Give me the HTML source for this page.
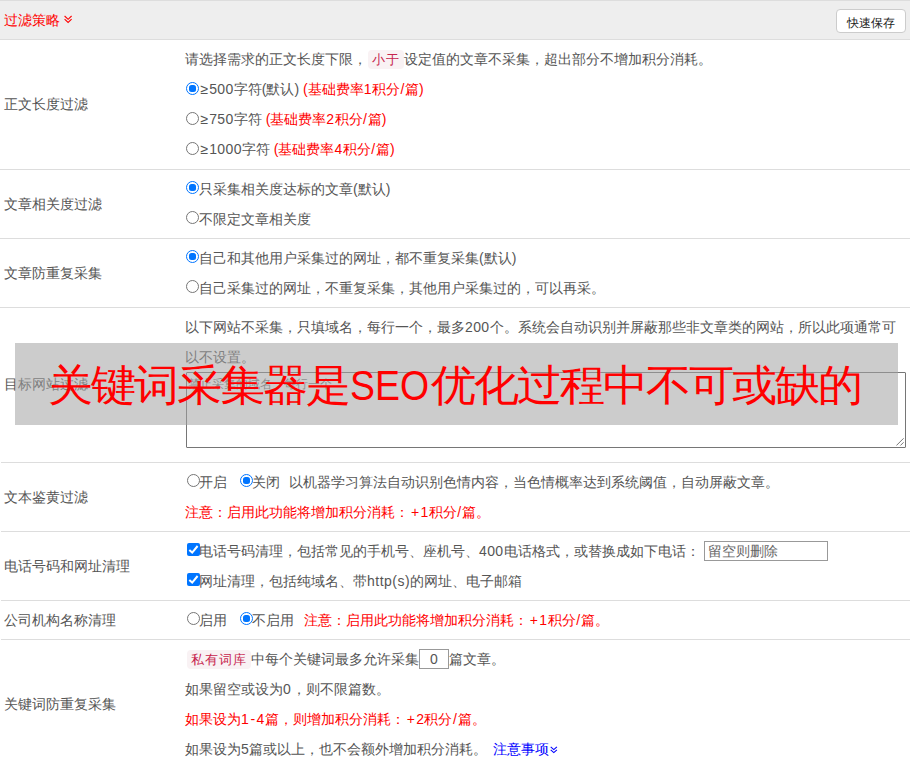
<!DOCTYPE html>
<html><head><meta charset="utf-8">
<style>
*{box-sizing:border-box;margin:0;padding:0}
html,body{width:912px;height:768px;overflow:hidden;background:#fff}
body{font-family:"Liberation Sans",sans-serif;font-size:14px;color:#555;position:relative}
.hd{position:absolute;left:0;top:0;width:910px;height:40px;background:#eee;border-top:1px solid #ddd;border-bottom:1px solid #ddd}
.hd .t{position:absolute;left:4px;top:9px;line-height:20px;color:#f00;font-size:14px;white-space:nowrap}
.btn{position:absolute;left:836px;top:8px;width:70px;height:24px;border:1px solid #ccc;border-radius:4px;background:#fff;color:#222;font-size:12px;line-height:26px;padding-right:1px;text-align:center}
.row{position:absolute;left:1px;width:909px;border-bottom:1px solid #ddd}
.lb{position:absolute;left:3px;line-height:20px;white-space:nowrap}
.ln{position:absolute;left:185px;height:30px;line-height:30px;white-space:nowrap}
.ge{padding-left:1.5px;letter-spacing:1px}
.dg{letter-spacing:.4px}
.sl{padding-left:.6px;letter-spacing:.7px}
.pl{padding-left:2px;letter-spacing:1.4px}
.r{color:#f00}
.rad{display:inline-block;width:13px;height:13px;border:1px solid #767676;border-radius:50%;vertical-align:0px;margin-left:2px;margin-right:-1px;position:relative;background:#fff}
.rad.on{border-color:#0075ff}
.rad.a,.rad.ad{margin-left:1px;margin-right:0}
.rad.ad{vertical-align:-1px}
.rad.on:after{content:"";position:absolute;left:2px;top:2px;width:7px;height:7px;border-radius:2.5px;background:#0075ff}
.chk{display:inline-block;width:13px;height:13px;border-radius:2px;background:#0075ff;vertical-align:0px;margin-left:2px;margin-right:-1px;position:relative}
.chk svg{position:absolute;left:0;top:0}
.tag{display:inline-block;background:#f9f2f4;color:#c7254e;font-size:13px;letter-spacing:1px;padding:0 4px 0 4px;border-radius:4px;height:19px;line-height:17px;padding-top:1px;vertical-align:0px}
.ov{position:absolute;left:15px;top:343px;width:883px;height:82px;background:rgba(163,163,163,0.55)}
.ovt{position:absolute;left:49px;top:350px;font-size:43px;line-height:70px;color:#f00;white-space:nowrap}
.ovt i{font-style:normal;display:inline-block;width:43px;text-align:center}
.ovt i>b{font-weight:normal;display:inline-block;transform:scaleX(1.05)}
.inp{display:inline-block;height:20px;border:1px solid #999;line-height:18px;vertical-align:top;margin-top:5px}
</style></head><body>
<div class="hd"><div class="t">过滤策略</div>
<svg style="position:absolute;left:64px;top:14px" width="10" height="9" viewBox="0 0 10 9"><path d="M0.6 1 L4.1 4.3 L7.6 1 M0.6 4.2 L4.1 7.5 L7.6 4.2" fill="none" stroke="#f00" stroke-width="1.1"/></svg>
<div class="btn">快速保存</div></div>

<div class="row" style="left:0;width:910px;top:40px;height:130px">
 <div class="lb" style="left:4px;top:54px">正文长度过滤</div>
</div>
<div class="ln" style="top:44px">请选择需求的正文长度下限，<span class="tag" style="margin-left:1px">小于</span>设定值的文章不采集，超出部分不增加积分消耗。</div>
<div class="ln" style="top:74px"><span class="rad on ad"></span><span class="ge">≥</span><span class="dg">500</span>字符(默认) <span class="r">(基础费率<span class="dg">1</span>积分<span class="sl">/</span>篇)</span></div>
<div class="ln" style="top:104px"><span class="rad ad"></span><span class="ge">≥</span><span class="dg">750</span>字符 <span class="r">(基础费率<span class="dg">2</span>积分<span class="sl">/</span>篇)</span></div>
<div class="ln" style="top:134px"><span class="rad ad"></span><span class="ge">≥</span><span class="dg">1000</span>字符 <span class="r">(基础费率<span class="dg">4</span>积分<span class="sl">/</span>篇)</span></div>

<div class="row" style="left:0;width:910px;top:170px;height:69px">
 <div class="lb" style="left:4px;top:24px">文章相关度过滤</div>
</div>
<div class="ln" style="top:174px"><span class="rad on a"></span>只采集相关度达标的文章(默认)</div>
<div class="ln" style="top:204px"><span class="rad a"></span>不限定文章相关度</div>

<div class="row" style="left:0;width:910px;top:239px;height:69px">
 <div class="lb" style="left:4px;top:24px">文章防重复采集</div>
</div>
<div class="ln" style="top:243px"><span class="rad on a"></span>自己和其他用户采集过的网址，都不重复采集(默认)</div>
<div class="ln" style="top:273px"><span class="rad a"></span>自己采集过的网址，不重复采集，其他用户采集过的，可以再采。</div>

<div class="row" style="top:308px;height:155px">
 <div class="lb" style="top:66px">目标网站过滤</div>
</div>
<div class="ln" style="top:312px">以下网站不采集，只填域名，每行一个，最多<span class="dg">200</span>个。系统会自动识别并屏蔽那些非文章类的网站，所以此项通常可</div>
<div class="ln" style="top:342px">以不设置。</div>
<div style="position:absolute;left:186px;top:372px;width:720px;height:76px;border:1px solid #767676;border-radius:1px;background:#fff"></div>
<div style="position:absolute;left:188px;top:372px;line-height:20px;font-size:12px;color:#777;white-space:nowrap;padding-top:2px">禁止采集的域名，每行一个</div>
<svg style="position:absolute;left:896px;top:437px" width="9" height="9" viewBox="0 0 9 9"><path d="M7.6 1.3 L0.4 8.5 M7.6 5.3 L4.4 8.5" stroke="#777" stroke-width="1" fill="none"/></svg>

<div class="row" style="top:463px;height:69px">
 <div class="lb" style="top:24px">文本鉴黄过滤</div>
</div>
<div class="ln" style="top:467px"><span class="rad"></span>开启<span class="rad on" style="margin-left:13px"></span>关闭 &nbsp;<span style="margin-left:1px">以</span>机器学习算法自动识别色情内容，当色情概率达到系统阈值，自动屏蔽文章。</div>
<div class="ln r" style="top:497px">注意：启用此功能将增加积分消耗：<span class="pl">+</span><span class="dg">1</span>积分<span class="sl">/</span>篇。</div>

<div class="row" style="top:532px;height:69px">
 <div class="lb" style="top:24px">电话号码和网址清理</div>
</div>
<div class="ln" style="top:536px"><span class="chk"><svg width="13" height="13" viewBox="0 0 13 13"><path d="M2.3 7 L5.2 9.6 L10.6 3" fill="none" stroke="#fff" stroke-width="2"/></svg></span>电话号码清理，包括常见的手机号、座机号、<span class="dg">400</span>电话格式，或替换成如下电话：</div>
<div class="inp" style="position:absolute;left:704px;top:536px;width:124px;color:#666;padding-left:3px;margin-top:5px">留空则删除</div>
<div class="ln" style="top:566px"><span class="chk"><svg width="13" height="13" viewBox="0 0 13 13"><path d="M2.3 7 L5.2 9.6 L10.6 3" fill="none" stroke="#fff" stroke-width="2"/></svg></span>网址清理，包括纯域名、带<span style="letter-spacing:.5px">http(s)</span>的网址、电子邮箱</div>

<div class="row" style="top:601px;height:39px">
 <div class="lb" style="top:9px">公司机构名称清理</div>
</div>
<div class="ln" style="top:605px"><span class="rad"></span>启用<span class="rad on" style="margin-left:13px"></span>不启用 &nbsp;<span class="r" style="margin-left:2px">注意：启用此功能将增加积分消耗：<span class="pl">+</span><span class="dg">1</span>积分<span class="sl">/</span>篇。</span></div>

<div class="row" style="top:640px;height:140px">
 <div class="lb" style="top:54px">关键词防重复采集</div>
</div>
<div class="ln" style="top:644px"><span class="tag" style="margin-left:2px">私有词库</span>中每个关键词最多允许采集<span class="inp" style="width:30px;text-align:center;color:#555">0</span>篇文章。</div>
<div class="ln" style="top:674px">如果留空或设为<span class="dg" style="padding-right:1.3px">0</span>，则不限篇数。</div>
<div class="ln r" style="top:704px">如果设为<span class="dg">1</span><span style="padding:0 1.3px">-</span><span class="dg">4</span>篇，则增加积分消耗：<span class="pl">+</span><span class="dg">2</span>积分<span class="sl">/</span>篇。</div>
<div class="ln" style="top:734px">如果设为<span class="dg">5</span>篇或以上，也不会额外增加积分消耗。 <span style="color:#00f;margin-left:2px">注意事项</span></div>
<svg style="position:absolute;left:550px;top:746px" width="8" height="8" viewBox="0 0 8 8"><path d="M0.7 0.8 L3.8 3.6 L6.9 0.8 M0.7 3.8 L3.8 6.6 L6.9 3.8" fill="none" stroke="#00f" stroke-width="1.1"/></svg>

<div class="ov"></div>
<div class="ovt"><i><b>关</b></i><i><b>键</b></i><i><b>词</b></i><i><b>采</b></i><i><b>集</b></i><i><b>器</b></i><i><b>是</b></i><span style="display:inline-block;width:82px;vertical-align:top"><span style="display:inline-block;transform:scaleX(.87);transform-origin:0 50%">SEO</span></span><i><b>优</b></i><i><b>化</b></i><i><b>过</b></i><i><b>程</b></i><i><b>中</b></i><i><b>不</b></i><i><b>可</b></i><i><b>或</b></i><i><b>缺</b></i><i><b>的</b></i></div>
</body></html>
